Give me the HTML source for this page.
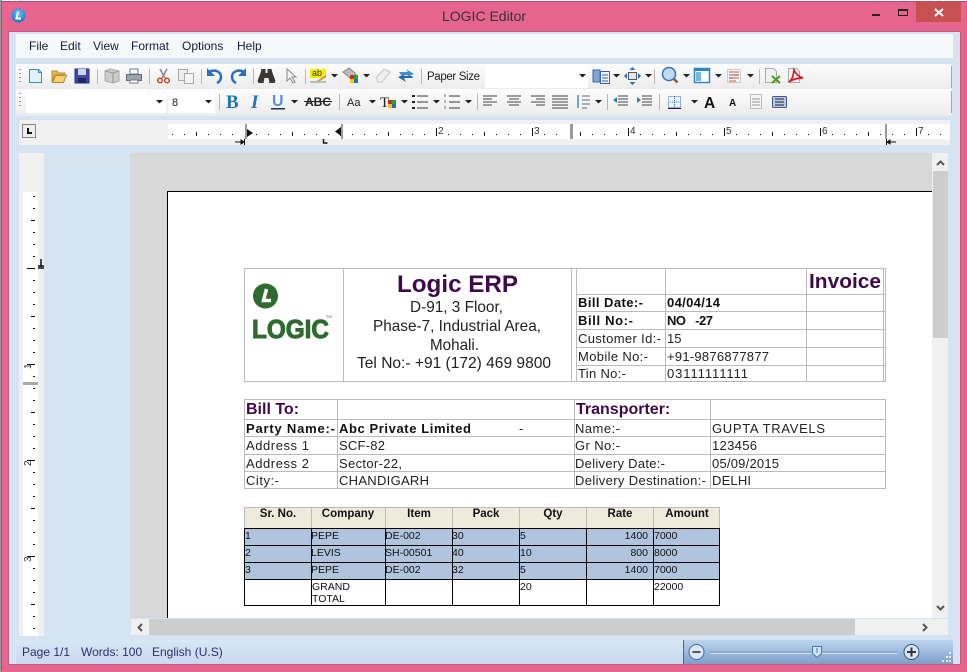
<!DOCTYPE html>
<html><head><meta charset="utf-8"><title>LOGIC Editor</title>
<style>
html,body{margin:0;padding:0;background:#fff;width:967px;height:672px;overflow:hidden}
svg{display:block}
text{font-family:"Liberation Sans",Arial,sans-serif;fill:#111}
.m{font-size:12px;fill:#1a1a3a}
.t1{font-size:12.5px;fill:#222}
.b{font-weight:bold;fill:#111}
.p{font-weight:bold;fill:#3f0a4a}
.h{font-size:16px;fill:#222}
.d{font-size:13px;fill:#222}
.r{font-size:10.5px;fill:#111}
.th{font-size:11.5px;font-weight:bold;text-anchor:middle;fill:#111}
.s{font-size:12px;fill:#24346e}
.n{font-size:10px;fill:#333}
</style></head><body>
<svg width="967" height="672" viewBox="0 0 967 672" xmlns="http://www.w3.org/2000/svg">
<defs>
<linearGradient id="tb" x1="0" y1="0" x2="0" y2="1"><stop offset="0" stop-color="#fdfdfd"/><stop offset="1" stop-color="#ececec"/></linearGradient>
<linearGradient id="st" x1="0" y1="0" x2="0" y2="1"><stop offset="0" stop-color="#d9e7f6"/><stop offset="1" stop-color="#c6d9ef"/></linearGradient>
<linearGradient id="st2" x1="0" y1="0" x2="0" y2="1"><stop offset="0" stop-color="#bcd4ef"/><stop offset="1" stop-color="#7e9fca"/></linearGradient>
<radialGradient id="ic" cx=".5" cy=".35" r=".7"><stop offset="0" stop-color="#6cc6f5"/><stop offset="1" stop-color="#0f6cc4"/></radialGradient>
</defs>

<!-- window frame -->
<rect width="967" height="672" fill="#fff"/>
<rect x="0" y="0" width="2" height="672" fill="#9a9a9a"/>
<rect x="1" y="1" width="966" height="671" fill="#E6658F"/>
<rect x="1" y="1" width="966" height="1" fill="#a8506d"/>
<rect x="1" y="1" width="1" height="670" fill="#a8506d"/>
<rect x="9" y="32" width="951" height="632" fill="#D6E4F2"/>
<rect x="8" y="31" width="953" height="1" fill="#c25a80"/>
<rect x="8" y="31" width="1" height="634" fill="#c25a80"/>
<rect x="960" y="31" width="1" height="634" fill="#c25a80"/>
<rect x="8" y="664" width="953" height="1" fill="#c25a80"/>

<!-- title bar -->
<circle cx="18.500" cy="15.500" r="7" fill="url(#ic)"/>
<path d="M18 11.500 L16.500 18.500 H21" stroke="#fff" stroke-width="2" fill="none"/>
<text x="484" y="21" text-anchor="middle" style="font-size:14px;fill:#333">LOGIC Editor</text>
<rect x="872" y="14" width="8" height="2" fill="#222"/>
<rect x="898.500" y="9.500" width="9" height="6" fill="none" stroke="#222"/><rect x="898" y="9" width="10" height="2" fill="#222"/>
<rect x="916" y="2" width="45" height="20" fill="#C75050"/>
<path d="M935 9 L943 16 M943 9 L935 16" stroke="#fff" stroke-width="2"/>

<!-- menu -->
<rect x="16" y="34" width="937" height="24" fill="#f7f8f9"/>
<text class="m" x="29" y="50">File</text>
<text class="m" x="60" y="50">Edit</text>
<text class="m" x="93" y="50">View</text>
<text class="m" x="131" y="50">Format</text>
<text class="m" x="182" y="50">Options</text>
<text class="m" x="237" y="50">Help</text>

<!-- toolbars -->
<rect x="16" y="64" width="936" height="25" rx="2" fill="url(#tb)"/>
<rect x="16" y="89" width="936" height="27" rx="2" fill="url(#tb)"/>
<rect x="951" y="66" width="1" height="22" fill="#aaa"/><rect x="951" y="91" width="1" height="22" fill="#aaa"/>
<path d="M20 69v1M20 73v1M20 77v1M20 81v1M20 93v1M20 97v1M20 101v1M20 105v1" stroke="#999" stroke-width="2"/>
<rect x="26" y="91" width="140" height="22" fill="#fff"/>
<rect x="168" y="91" width="47" height="22" fill="#fff"/>
<rect x="485" y="65" width="103" height="23" fill="#fff"/>
<!-- separators -->
<path d="M97.500 69v15M149.500 69v15M201.500 69v15M253.500 69v15M305.500 69v15M421.500 69v15M654.500 69v15M759.500 69v15M219.500 94v16M339.500 94v16M477.500 94v16M607.500 94v16M659.500 94v16" stroke="#b8b8b8"/>
<!-- arrows -->
<path d="M331 74h7l-3.500 3.500zM363 74h7l-3.500 3.500zM579 74h7l-3.500 3.500zM613 74h7l-3.500 3.500zM645 74h7l-3.500 3.500zM683 74h7l-3.500 3.500zM715 74h7l-3.500 3.500zM747 74h7l-3.500 3.500zM156 100h7l-3.500 3.500zM205 100h7l-3.500 3.500zM291 100h7l-3.500 3.500zM369 100h7l-3.500 3.500zM401 100h7l-3.500 3.500zM433 100h7l-3.500 3.500zM465 100h7l-3.500 3.500zM595 100h7l-3.500 3.500zM691 100h7l-3.500 3.500z" fill="#222"/>

<!-- row 1 icons -->
<path d="M29.500 69.500h9l3 3v10h-12z" fill="#e3f1fb" stroke="#3a8cc4"/><path d="M38.500 69.500v3h3" fill="none" stroke="#3a8cc4"/>
<path d="M52 71h5l1 2h7v2H55l-3 7z" fill="#e8b850" stroke="#b78a2a"/><path d="M52.500 82.500l3-7h11l-3 7z" fill="#f4cf74" stroke="#b78a2a"/>
<rect x="75" y="69" width="14" height="14" fill="#3b4aa8" stroke="#2a3278"/><rect x="78" y="69" width="8" height="6" fill="#cdd6ee"/><rect x="78" y="78" width="8" height="5" fill="#22285f"/>
<path d="M105 71l5-2 9 2v10l-6 2-8-2z" fill="#ccc" stroke="#aaa"/><path d="M113 73v10M105 71l8 2 6-2" stroke="#999" fill="none"/>
<rect x="130" y="69" width="8" height="5" fill="#fff" stroke="#5d7ea8"/><rect x="126.500" y="74.500" width="15" height="6" fill="#9aa4ad" stroke="#667"/><rect x="130" y="80" width="8" height="3" fill="#fff" stroke="#778"/>
<path d="M160 69l5 9M167 69l-5 9" stroke="#888" stroke-width="1.500"/><circle cx="160" cy="80.500" r="2.300" fill="none" stroke="#cc4422" stroke-width="1.500"/><circle cx="167" cy="80.500" r="2.300" fill="none" stroke="#cc4422" stroke-width="1.500"/>
<rect x="178.500" y="69.500" width="9" height="11" fill="#eee" stroke="#aaa"/><rect x="184.500" y="73.500" width="9" height="10" fill="#f4f4f4" stroke="#aaa"/>
<path d="M209 72c5-3 12-1 12 5 0 3-2 5-4 6" fill="none" stroke="#2a6fc0" stroke-width="2.500"/><path d="M207 68v8h8z" fill="#2a6fc0"/>
<path d="M244 72c-5-3-12-1-12 5 0 3 2 5 4 6" fill="none" stroke="#2a6fc0" stroke-width="2.500"/><path d="M246 68v8h-8z" fill="#2a6fc0"/>
<path d="M261.500 69h4v4h2v-4h4l1 4 3 8-1 2h-5l-1-5h-4l-1 5h-5l-1-2 3-8z" fill="#3a3632"/>
<path d="M287 69v12l3-3 3 5 2-1-3-5h4z" fill="#f4f4f4" stroke="#888"/>
<rect x="310" y="69" width="16" height="9" fill="#f3ee00"/><text x="312" y="76" style="font-size:9px;fill:#333">ab</text><path d="M317 82l9-6" stroke="#d89a50" stroke-width="2"/><rect x="310" y="81" width="16" height="2" fill="#bbb"/>
<path d="M343 72l6-4 7 6-6 4z" fill="#bbb" stroke="#888"/><rect x="350" y="75" width="4" height="4" fill="#d22"/><rect x="354" y="75" width="4" height="4" fill="#2a2"/><rect x="350" y="79" width="4" height="4" fill="#ec0"/><rect x="354" y="79" width="4" height="4" fill="#36c"/>
<path d="M376 78l8-9 6 3-8 10h-4z" fill="#efefef" stroke="#c4c4c4"/>
<path d="M399 72h9l-2-3 8 5-7 3 1-2h-7z" fill="#3f8fd4"/><path d="M413 78h-9l2 4-8-5 7-3-1 2h8z" fill="#1d6bb2"/>
<text class="t1" x="427" y="80" style="font-size:11.500px" textLength="53">Paper Size</text>
<path d="M593 70h7v12h-7z" fill="#7fa6d8" stroke="#3c66a8"/><rect x="600.500" y="71.500" width="9" height="12" fill="#eef3fa" stroke="#3c66a8"/><path d="M602 75h6M602 78h6M602 81h6" stroke="#3c66a8"/>
<rect x="628.500" y="72.500" width="8" height="7" fill="#e6e6e6" stroke="#556"/><path d="M632.500 67l-3 3h6zM632.500 85l-3-3h6zM624 76l3-3v6zM641 76l-3-3v6z" fill="#2a6fc0"/>
<circle cx="669" cy="74" r="6.500" fill="#bcdcf4" stroke="#3e6ea6" stroke-width="1.500"/><path d="M674 79l3.500 3.500" stroke="#8a5a2a" stroke-width="2.500"/>
<rect x="694.500" y="68.500" width="15" height="14" fill="#fff" stroke="#2e88c6" stroke-width="1.500"/><rect x="694" y="68" width="16" height="3" fill="#2e88c6"/><rect x="696" y="72" width="5" height="9" fill="#7bb7e0"/>
<rect x="727.500" y="69.500" width="13" height="13" fill="#f2f4f8" stroke="#ccc"/><path d="M729 72h10M729 75h10M729 78h10M729 81h7" stroke="#d65a3a"/><path d="M733 75h6M729 78h4" stroke="#555"/>
<path d="M765.500 68.500h8l3 3v11h-11z" fill="#f2f2f2" stroke="#aaa"/><path d="M772 76l8 7M780 76l-8 7" stroke="#4a9a1e" stroke-width="2"/>
<path d="M788.500 68.500h8l3 3v11h-11z" fill="#f2f2f2" stroke="#aaa"/><path d="M794 70c-1 8-2 9-5 12 4-3 8-4 14-4-4-1-7-4-9-8z" fill="none" stroke="#e0182a" stroke-width="1.700"/>

<!-- row 2 -->
<text x="172" y="106" style="font-size:11px;fill:#222">8</text>
<text x="226" y="108" style="font-family:'Liberation Serif',serif;font-size:19px;font-weight:bold;fill:#1f78b4">B</text>
<text x="251" y="108" style="font-family:'Liberation Serif',serif;font-size:19px;font-weight:bold;font-style:italic;fill:#1f78b4">I</text>
<text x="272" y="106" style="font-size:16px;font-weight:bold;fill:#5b8fd0">U</text>
<rect x="271" y="108" width="14" height="1.500" fill="#234"/>
<text x="305" y="106" style="font-size:12px;font-weight:bold;fill:#222" textLength="26" lengthAdjust="spacingAndGlyphs">ABC</text><rect x="304" y="101" width="28" height="1" fill="#222"/>
<text x="347" y="106" style="font-size:11px;fill:#222">Aa</text>
<text x="380" y="107" style="font-family:'Liberation Serif',serif;font-size:15px;fill:#222">T</text>
<rect x="388" y="100" width="4" height="4" fill="#d22"/><rect x="392" y="100" width="4" height="4" fill="#2a2"/><rect x="388" y="104" width="4" height="4" fill="#ec0"/><rect x="392" y="104" width="4" height="4" fill="#36c"/>
<path d="M412 95h3v2h-3zM412 101h3v2h-3zM412 107h3v2h-3z" fill="#222"/><path d="M417 96h11M417 102h11M417 108h11" stroke="#777" stroke-width="1.500"/>
<path d="M445 94v3M445 100v3M445 106v3" stroke="#777"/><path d="M449 96h11M449 102h11M449 108h11" stroke="#777" stroke-width="1.500"/>
<path d="M483 96h14M483 99h9M483 102h14M483 105h9" stroke="#666" stroke-width="1.200"/>
<path d="M507 96h14M509 99h10M507 102h14M509 105h10" stroke="#666" stroke-width="1.200"/>
<path d="M531 96h14M536 99h9M531 102h14M536 105h9" stroke="#666" stroke-width="1.200"/>
<path d="M552 96h16M552 99h16M552 102h16M552 105h16M552 108h16" stroke="#666" stroke-width="1.200"/>
<path d="M578 95v13" stroke="#3d8fd0" stroke-width="1.500"/><path d="M582 96h8M582 100h8M582 104h8M582 108h5" stroke="#666"/>
<path d="M618 96h10M618 99h10M618 102h10M618 105h10" stroke="#666" stroke-width="1.200"/><path d="M613 100l4-3v6z" fill="#2a7fc8"/>
<path d="M642 96h10M642 99h10M642 102h10M642 105h10" stroke="#666" stroke-width="1.200"/><path d="M641 100l-4-3v6z" fill="#2a7fc8"/>
<rect x="668.500" y="96.500" width="12" height="11" fill="none" stroke="#2a6ae0" stroke-dasharray="1 1"/><path d="M674.500 96v11M668 102h12" stroke="#2a6ae0" stroke-dasharray="1 1"/><rect x="668" y="108" width="13" height="1" fill="#222"/>
<text x="704" y="108" style="font-size:15.500px;font-weight:bold;fill:#111">A</text>
<text x="729" y="106" style="font-size:10px;font-weight:bold;fill:#111">A</text>
<rect x="750.500" y="94.500" width="11" height="14" fill="#f6f6f6" stroke="#bbb"/><path d="M752 99h8M752 102h8M752 105h8" stroke="#999"/>
<rect x="772.500" y="96.500" width="14" height="11" rx="1" fill="#b9c8e4" stroke="#40588e"/><path d="M775 99h9M775 102h9M775 105h9" stroke="#223"/>

<!-- horizontal ruler -->
<rect x="19" y="120" width="931" height="25" fill="#f0f0f0"/>
<rect x="168" y="124" width="782" height="15" fill="#fff"/>
<rect x="22.500" y="124.500" width="13" height="13" fill="#eee" stroke="#888"/>
<path d="M28 128v5h4" fill="none" stroke="#111" stroke-width="2"/>
<path stroke="#111" fill="none" d="M172.500 134v1M184.500 134v1M196.500 132v4M208.500 134v1M220.500 134v1M232.500 134v1M256.500 134v1M268.500 134v1M280.500 134v1M292.500 132v4M304.500 134v1M316.500 134v1M328.500 134v1M340.500 128v8M352.500 134v1M364.500 134v1M376.500 134v1M388.500 132v4M400.500 134v1M412.500 134v1M424.500 134v1M436.500 128v8M448.500 134v1M460.500 134v1M472.500 134v1M484.500 132v4M496.500 134v1M508.500 134v1M520.500 134v1M532.500 128v8M544.500 134v1M556.500 134v1M580.500 132v4M592.500 134v1M604.500 134v1M616.500 134v1M628.500 128v8M640.500 134v1M652.500 134v1M664.500 134v1M676.500 132v4M688.500 134v1M700.500 134v1M712.500 134v1M724.500 128v8M736.500 134v1M748.500 134v1M760.500 134v1M772.500 132v4M784.500 134v1M796.500 134v1M808.500 134v1M820.500 128v8M832.500 134v1M844.500 134v1M856.500 134v1M868.500 132v4M880.500 134v1M892.500 134v1M904.500 134v1M916.500 128v8M928.500 134v1M940.500 134v1"/>
<text class="n" x="438" y="134">2</text><text class="n" x="534" y="134">3</text><text class="n" x="630" y="134">4</text><text class="n" x="726" y="134">5</text><text class="n" x="822" y="134">6</text><text class="n" x="918" y="134">7</text>
<rect x="245" y="124" width="2" height="15" fill="#999"/><rect x="341" y="124" width="2" height="15" fill="#999"/><rect x="570" y="124" width="3" height="15" fill="#999"/><rect x="885" y="124" width="2" height="15" fill="#999"/>
<path d="M247 129l6 4-6 4zM341 127l-6 4.500 6 4.500z" fill="#111"/>
<path d="M235 142h9M244.500 139v6M241 140l3 2-3 2z" stroke="#111" fill="#111"/>
<path d="M323.500 139v4h4" fill="none" stroke="#111" stroke-width="1.500"/>
<path d="M887 142h9M886.500 139v6M890 140l-3 2 3 2z" stroke="#111" fill="#111"/>

<!-- vertical ruler -->
<rect x="19" y="153" width="25" height="483" fill="#f0f0f0"/>
<rect x="23" y="192" width="15" height="444" fill="#fff"/>
<path stroke="#111" fill="none" d="M33 196.500h2M33 208.500h2M31 220.500h4M33 232.500h2M33 244.500h2M33 256.500h2M27 268.500h8M33 280.500h2M33 292.500h2M33 304.500h2M31 316.500h4M33 328.500h2M33 340.500h2M33 352.500h2M27 364.500h8M33 376.500h2M33 388.500h2M33 400.500h2M31 412.500h4M33 424.500h2M33 436.500h2M33 448.500h2M27 460.500h8M33 472.500h2M33 484.500h2M33 496.500h2M31 508.500h4M33 520.500h2M33 532.500h2M33 544.500h2M27 556.500h8M33 568.500h2M33 580.500h2M33 592.500h2M31 604.500h4M33 616.500h2M33 628.500h2"/>
<rect x="23" y="382" width="15" height="3" fill="#aaa"/>
<path d="M41 259v8M38 266h6M38 268h6" stroke="#111" stroke-width="1.500"/>
<text class="n" transform="translate(31,369) rotate(-90)">1</text>
<text class="n" transform="translate(31,466) rotate(-90)">2</text>
<text class="n" transform="translate(31,562) rotate(-90)">3</text>

<!-- document area -->
<rect x="130" y="153" width="802" height="465" fill="#d8d8d8"/>
<rect x="167" y="191" width="765" height="427" fill="#fff"/>
<rect x="167" y="191" width="765" height="1" fill="#000"/>
<rect x="167" y="191" width="1" height="427" fill="#000"/>

<!-- scrollbars -->
<rect x="932" y="153" width="16" height="465" fill="#f0f0f0"/>
<rect x="933" y="171" width="15" height="167" fill="#cdcdcd"/>
<path d="M937 165l3.500-3.500 3.500 3.500M937 606l3.500 3.500 3.500-3.500" fill="none" stroke="#555" stroke-width="2"/>
<rect x="131" y="619" width="817" height="16" fill="#f0f0f0"/>
<rect x="149" y="619" width="706" height="16" fill="#cdcdcd"/>
<path d="M142 624l-3.500 3.500 3.500 3.500M923 624l3.500 3.500-3.500 3.500" fill="none" stroke="#555" stroke-width="2"/>

<!-- table 1 -->
<path stroke="#bbb" fill="none" d="M244.500 268.500h641v113h-641zM343.500 268v113M571.500 268v113M576.500 268v113M665.500 268v113M806.500 268v113M883.500 268v113M576 294.500h309M576 311.500h309M576 329.500h309M576 347.500h309M576 365.500h309"/>
<circle cx="265.500" cy="296" r="12.500" fill="#2f6a2f"/>
<path d="M266.500 289l-3 11.500h7.500" fill="none" stroke="#fff" stroke-width="3.500"/>
<text x="252" y="338" style="font-size:26px;font-weight:bold;fill:#2f6a2f;stroke:#2f6a2f;stroke-width:1" textLength="77" lengthAdjust="spacingAndGlyphs">LOGIC</text>
<text x="326" y="318" style="font-size:4px;fill:#555">TM</text>
<text class="p" x="397" y="292" textLength="121" lengthAdjust="spacingAndGlyphs" style="font-size:24px">Logic ERP</text>
<text class="h" x="410" y="312" textLength="93" lengthAdjust="spacingAndGlyphs">D-91, 3 Floor,</text>
<text class="h" x="373" y="331" textLength="168" lengthAdjust="spacingAndGlyphs">Phase-7, Industrial Area,</text>
<text class="h" x="430" y="350" textLength="49" lengthAdjust="spacingAndGlyphs">Mohali.</text>
<text class="h" x="357" y="368" textLength="194" lengthAdjust="spacingAndGlyphs">Tel No:- +91 (172) 469 9800</text>
<text class="p" x="809" y="288" textLength="72" lengthAdjust="spacingAndGlyphs" style="font-size:20.500px">Invoice</text>
<text class="b" x="578" y="307" textLength="65" style="font-size:13px">Bill Date:-</text>
<text class="b" x="667" y="307" textLength="53" style="font-size:13px">04/04/14</text>
<text class="b" x="578" y="325" textLength="55" style="font-size:13px">Bill No:-</text>
<text class="b" x="667" y="325" textLength="46" style="font-size:13px" xml:space="preserve">NO   -27</text>
<text class="d" x="578" y="343" textLength="83">Customer Id:-</text>
<text class="d" x="667" y="343">15</text>
<text class="d" x="578" y="361" textLength="70">Mobile No:-</text>
<text class="d" x="667" y="361" textLength="102">+91-9876877877</text>
<text class="d" x="578" y="378" textLength="48">Tin No:-</text>
<text class="d" x="667" y="378" textLength="81">03111111111</text>

<!-- table 2 -->
<path stroke="#bbb" fill="none" d="M244.500 399.500h641v89h-641zM337.500 399v89M574.500 399v89M710.500 399v89M244 419.500h641M244 436.500h641M244 454.500h641M244 471.500h641"/>
<text class="p" x="246" y="414" style="font-size:16px">Bill To:</text>
<text class="p" x="576" y="414" style="font-size:16px">Transporter:</text>
<text class="b" x="246" y="433" textLength="89" style="font-size:13px">Party Name:-</text>
<text class="b" x="339" y="433" textLength="132" style="font-size:13px">Abc Private Limited</text>
<text class="d" x="519" y="433">-</text>
<text class="d" x="575" y="433" textLength="45">Name:-</text>
<text class="d" x="712" y="433" textLength="113">GUPTA TRAVELS</text>
<text class="d" x="246" y="450" textLength="63">Address 1</text>
<text class="d" x="339" y="450" textLength="46">SCF-82</text>
<text class="d" x="575" y="450" textLength="45">Gr No:-</text>
<text class="d" x="712" y="450" textLength="45">123456</text>
<text class="d" x="246" y="468" textLength="63">Address 2</text>
<text class="d" x="339" y="468" textLength="63">Sector-22,</text>
<text class="d" x="575" y="468" textLength="90">Delivery Date:-</text>
<text class="d" x="712" y="468" textLength="67">05/09/2015</text>
<text class="d" x="246" y="485" textLength="33">City:-</text>
<text class="d" x="339" y="485" textLength="90">CHANDIGARH</text>
<text class="d" x="575" y="485" textLength="131">Delivery Destination:-</text>
<text class="d" x="712" y="485" textLength="39">DELHI</text>

<!-- table 3 -->
<rect x="244" y="507" width="476" height="21" fill="#EEEBDC"/>
<rect x="244" y="528" width="476" height="51" fill="#B0C4DE"/>
<path stroke="#bbb" fill="none" d="M244.500 507.500h475M244.500 507v21M311.500 507v21M385.500 507v21M452.500 507v21M519.500 507v21M586.500 507v21M653.500 507v21M719.500 507v21"/>
<path stroke="#000" fill="none" d="M244 528.500h476M244 545.500h476M244 562.500h476M244 579.500h476M244 605.500h476M244.500 528v78M311.500 528v78M385.500 528v78M452.500 528v78M519.500 528v78M586.500 528v78M653.500 528v78M719.500 528v78"/>
<text class="th" x="278" y="517">Sr. No.</text><text class="th" x="348" y="517">Company</text><text class="th" x="419" y="517">Item</text><text class="th" x="486" y="517">Pack</text><text class="th" x="553" y="517">Qty</text><text class="th" x="620" y="517">Rate</text><text class="th" x="687" y="517">Amount</text>
<text class="r" x="245" y="539">1</text><text class="r" x="311" y="539">PEPE</text><text class="r" x="385" y="539">DE-002</text><text class="r" x="452" y="539">30</text><text class="r" x="520" y="539">5</text><text class="r" x="648" y="539" text-anchor="end">1400</text><text class="r" x="654" y="539">7000</text>
<text class="r" x="245" y="556">2</text><text class="r" x="311" y="556">LEVIS</text><text class="r" x="385" y="556">SH-00501</text><text class="r" x="452" y="556">40</text><text class="r" x="520" y="556">10</text><text class="r" x="648" y="556" text-anchor="end">800</text><text class="r" x="654" y="556">8000</text>
<text class="r" x="245" y="573">3</text><text class="r" x="311" y="573">PEPE</text><text class="r" x="385" y="573">DE-002</text><text class="r" x="452" y="573">32</text><text class="r" x="520" y="573">5</text><text class="r" x="648" y="573" text-anchor="end">1400</text><text class="r" x="654" y="573">7000</text>
<text class="r" x="312" y="590">GRAND</text><text class="r" x="312" y="602">TOTAL</text><text class="r" x="520" y="590">20</text><text class="r" x="654" y="590">22000</text>

<!-- status bar -->
<rect x="16" y="640" width="668" height="24" fill="url(#st)"/>
<rect x="684" y="640" width="269" height="24" fill="url(#st2)"/>
<rect x="683" y="640" width="1" height="24" fill="#3f6aa8"/>
<text class="s" x="22" y="656">Page 1/1</text>
<text class="s" x="81" y="656">Words: 100</text>
<text class="s" x="152" y="656">English (U.S)</text>
<rect x="710" y="651" width="187" height="2" fill="#8ea8cc"/>
<rect x="710" y="653" width="187" height="1" fill="#d3e1f3"/>
<circle cx="696.500" cy="652" r="7.500" fill="#dbe7f6" stroke="#3f6aa8"/><path d="M692.500 652h8" stroke="#556" stroke-width="2"/>
<circle cx="911.500" cy="652" r="7.500" fill="#dbe7f6" stroke="#2f4f88"/><path d="M907 652h9M911.500 647.500v9" stroke="#334" stroke-width="2"/>
<path d="M812.500 646.500h9v7l-4.500 4-4.500-4z" fill="#d4e4f8" stroke="#4a78b4"/>
<path d="M817 648v5" stroke="#4a78b4"/>
<path d="M949 652h2v2h-2zM946 656h2v2h-2zM949 656h2v2h-2zM942 660h2v2h-2zM946 660h2v2h-2zM949 660h2v2h-2z" fill="#e6eef8"/>
</svg>
</body></html>
